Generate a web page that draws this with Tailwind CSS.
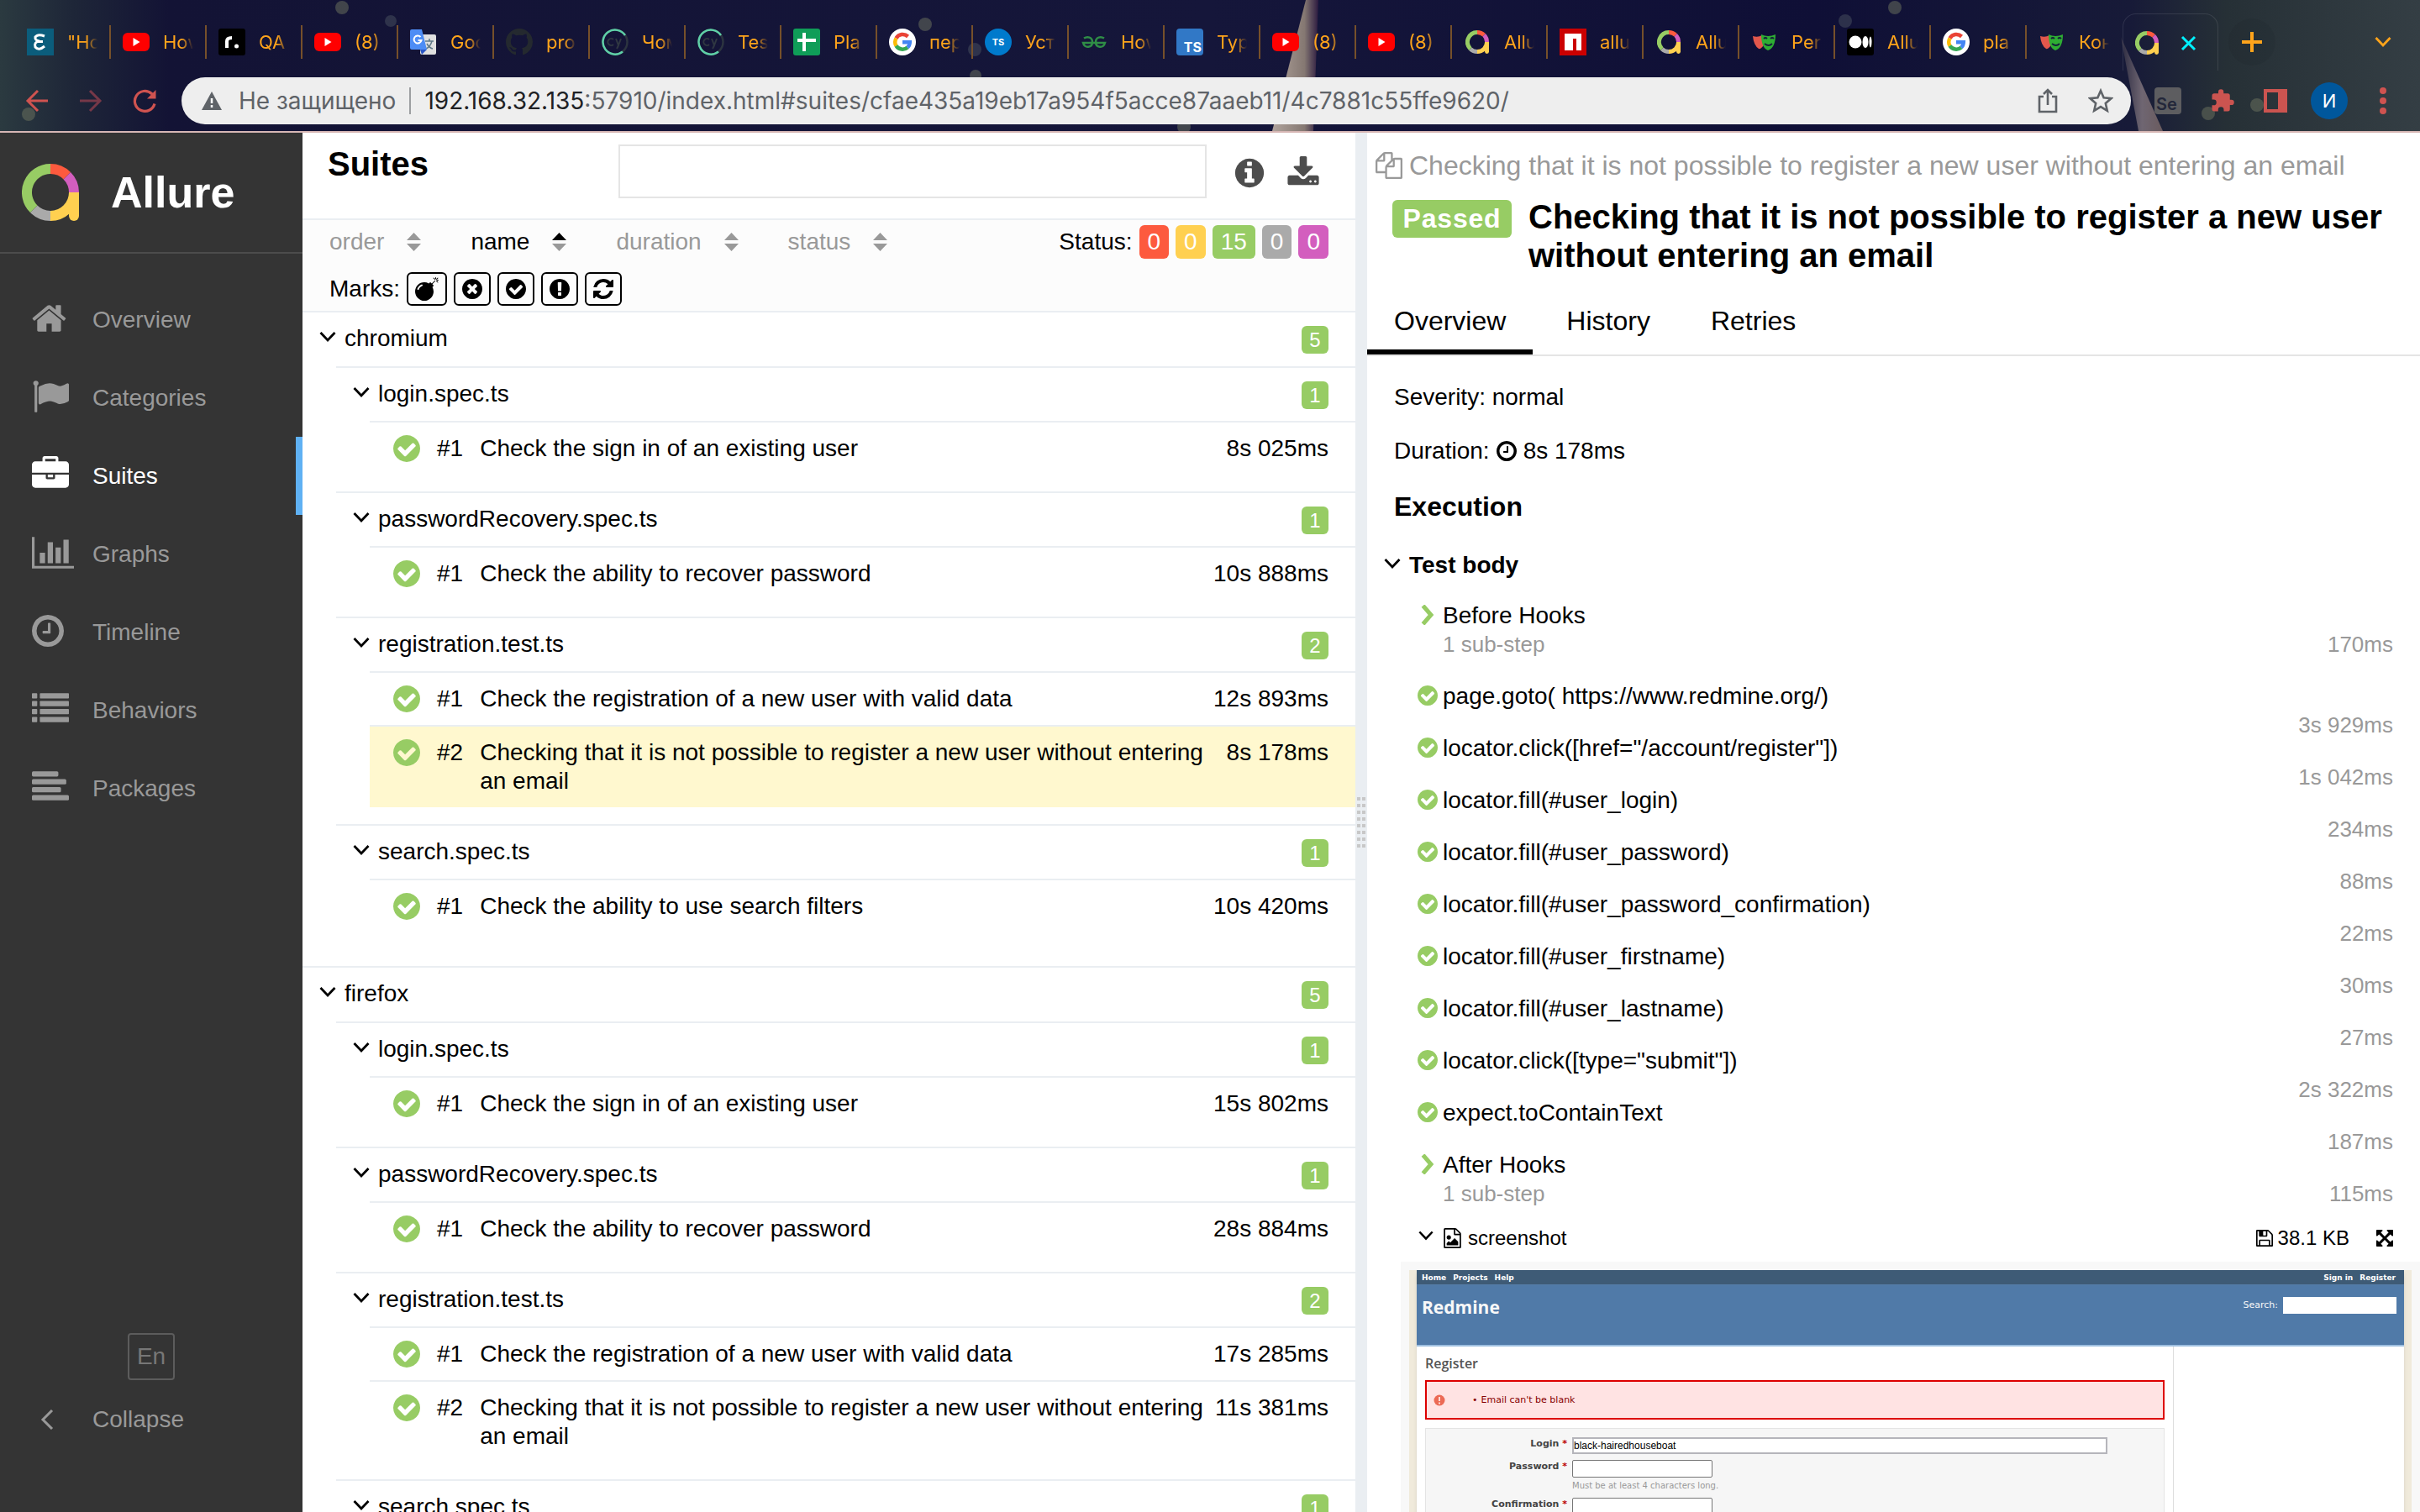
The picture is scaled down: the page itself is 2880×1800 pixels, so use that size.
<!DOCTYPE html>
<html lang="en">
<head>
<meta charset="utf-8">
<title>Allure Report</title>
<script src="https://cdn.jsdelivr.net/npm/@tailwindcss/browser@4"></script>
</head>
<body class="flex h-screen flex-col overflow-hidden bg-white font-['Liberation_Sans',Arial,sans-serif] text-[28px] leading-[34px] text-black">

<!-- Shared icon set -->
<svg class="hidden" aria-hidden="true">
  <symbol id="i-home" viewBox="64 0 1792 1792"><path d="M1472 992v480q0 26-19 45t-45 19h-384v-384h-256v384h-384q-26 0-45-19t-19-45v-480q0-1 .5-3t.5-3l575-474 575 474q1 2 1 6zm223-69l-62 74q-8 9-21 11h-3q-13 0-21-7l-692-577-692 577q-12 8-24 7-13-2-21-11l-62-74q-8-10-7-23.5t11-21.5l719-599q32-26 76-26t76 26l244 204v-195q0-14 9-23t23-9h192q14 0 23 9t9 23v408l219 182q10 8 11 21.5t-7 23.5z"/></symbol>
  <symbol id="i-flag" viewBox="0 0 1792 1792"><path d="M320 256q0 72-64 110v1266q0 13-9.5 22.5t-22.5 9.5h-64q-13 0-22.5-9.5t-9.5-22.5v-1266q-64-38-64-110 0-53 37.5-90.5t90.5-37.5 90.5 37.5 37.5 90.5zm1472 64v763q0 25-12.5 38.5t-39.5 27.5q-215 116-369 116-61 0-123.5-22t-108.5-48-115.5-48-142.5-22q-192 0-464 146-17 9-33 9-26 0-45-19t-19-45v-742q0-32 31-55 21-14 79-43 236-120 421-120 107 0 200 29t219 88q38 19 88 19 54 0 117.5-21t110-47 88-47 54.5-21q26 0 45 19t19 45z"/></symbol>
  <symbol id="i-case" viewBox="0 0 1792 1792"><path d="M640 256h512v-128h-512v128zm1152 640v480q0 66-47 113t-113 47h-1472q-66 0-113-47t-47-113v-480h672v160q0 26 19 45t45 19h320q26 0 45-19t19-45v-160h672zm-768 0v128h-256v-128h256zm768-480v384h-1792v-384q0-66 47-113t113-47h352v-160q0-40 28-68t68-28h576q40 0 68 28t28 68v160h352q66 0 113 47t47 113z"/></symbol>
  <symbol id="i-chart" viewBox="0 0 2048 1792"><path d="M640 896v512h-256v-512h256zm384-512v1024h-256v-1024h256zm1024 1152v128h-2048v-1536h128v1408h1920zm-640-896v768h-256v-768h256zm384-384v1152h-256v-1152h256z"/></symbol>
  <symbol id="i-clock" viewBox="128 128 1536 1536"><path d="M1024 544v448q0 14-9 23t-23 9h-320q-14 0-23-9t-9-23v-64q0-14 9-23t23-9h224v-352q0-14 9-23t23-9h64q14 0 23 9t9 23zm416 352q0-148-73-273t-198-198-273-73-273 73-198 198-73 273 73 273 198 198 273 73 273-73 198-198 73-273zm224 0q0 209-103 385.5t-279.5 279.5-385.5 103-385.5-103-279.5-279.5-103-385.5 103-385.5 279.5-279.5 385.5-103 385.5 103 279.5 279.5 103 385.5z"/></symbol>
  <symbol id="i-list" viewBox="0 0 1792 1792"><g><rect y="128" width="256" height="256" rx="32"/><rect y="512" width="256" height="256" rx="32"/><rect y="896" width="256" height="256" rx="32"/><rect y="1280" width="256" height="256" rx="32"/><rect x="384" y="128" width="1408" height="256" rx="32"/><rect x="384" y="512" width="1408" height="256" rx="32"/><rect x="384" y="896" width="1408" height="256" rx="32"/><rect x="384" y="1280" width="1408" height="256" rx="32"/></g></symbol>
  <symbol id="i-align" viewBox="0 0 1792 1792"><rect y="128" width="1280" height="256" rx="64"/><rect y="512" width="1664" height="256" rx="64"/><rect y="896" width="1408" height="256" rx="64"/><rect y="1280" width="1792" height="256" rx="64"/></symbol>
  <symbol id="i-check" viewBox="128 128 1536 1536"><path d="M1412 734q0-28-18-46l-91-90q-19-19-45-19t-45 19l-408 407-226-226q-19-19-45-19t-45 19l-91 90q-18 18-18 46 0 27 18 45l362 362q19 19 45 19 27 0 46-19l543-543q18-18 18-45zm252 162q0 209-103 385.5t-279.5 279.5-385.5 103-385.5-103-279.5-279.5-103-385.5 103-385.5 279.5-279.5 385.5-103 385.5 103 279.5 279.5 103 385.5z"/></symbol>
  <symbol id="i-times" viewBox="128 128 1536 1536"><path d="M1277 1122q0-26-19-45l-181-181 181-181q19-19 19-45 0-27-19-46l-90-90q-19-19-46-19-26 0-45 19l-181 181-181-181q-19-19-45-19-27 0-46 19l-90 90q-19 19-19 46 0 26 19 45l181 181-181 181q-19 19-19 45 0 27 19 46l90 90q19 19 46 19 26 0 45-19l181-181 181 181q19 19 45 19 27 0 46-19l90-90q19-19 19-46zm387-226q0 209-103 385.5t-279.5 279.5-385.5 103-385.5-103-279.5-279.5-103-385.5 103-385.5 279.5-279.5 385.5-103 385.5 103 279.5 279.5 103 385.5z"/></symbol>
  <symbol id="i-excl" viewBox="128 128 1536 1536"><path d="M896 128q209 0 385.5 103t279.5 279.5 103 385.5-103 385.5-279.5 279.5-385.5 103-385.5-103-279.5-279.5-103-385.5 103-385.5 279.5-279.5 385.5-103zm128 1247v-190q0-14-9-23.5t-22-9.5h-192q-13 0-23 10t-10 23v190q0 13 10 23t23 10h192q13 0 22-9.5t9-23.5zm-2-344l18-621q0-12-10-18-10-8-24-8h-220q-14 0-24 8-10 6-10 18l17 621q0 10 10 17.5t24 7.5h185q14 0 23.5-7.5t10.5-17.5z"/></symbol>
  <symbol id="i-info" viewBox="0 0 1792 1792"><path d="M1152 1376v-160q0-14-9-23t-23-9h-96v-512q0-14-9-23t-23-9h-320q-14 0-23 9t-9 23v160q0 14 9 23t23 9h96v320h-96q-14 0-23 9t-9 23v160q0 14 9 23t23 9h448q14 0 23-9t9-23zm-128-896v-160q0-14-9-23t-23-9h-192q-14 0-23 9t-9 23v160q0 14 9 23t23 9h192q14 0 23-9t9-23zm640 416q0 209-103 385.5t-279.5 279.5-385.5 103-385.5-103-279.5-279.5-103-385.5 103-385.5 279.5-279.5 385.5-103 385.5 103 279.5 279.5 103 385.5z"/></symbol>
  <symbol id="i-download" viewBox="0 0 1792 1792"><path d="M1344 1344q0-26-19-45t-45-19-45 19-19 45 19 45 45 19 45-19 19-45zm256 0q0-26-19-45t-45-19-45 19-19 45 19 45 45 19 45-19 19-45zm128-224v320q0 40-28 68t-68 28h-1472q-40 0-68-28t-28-68v-320q0-40 28-68t68-28h465l135 136q58 56 136 56t136-56l136-136h464q40 0 68 28t28 68zm-325-569q17 41-14 70l-448 448q-18 19-45 19t-45-19l-448-448q-31-29-14-70 17-39 59-39h256v-448q0-26 19-45t45-19h256q26 0 45 19t19 45v448h256q42 0 59 39z"/></symbol>
  <symbol id="i-refresh" viewBox="128 128 1536 1536"><path d="M1639 1056q0 5-1 7-64 268-268 434.5t-478 166.5q-146 0-282.5-55t-243.5-157l-129 129q-19 19-45 19t-45-19-19-45v-448q0-26 19-45t45-19h448q26 0 45 19t19 45-19 45l-137 137q71 66 161 102t187 36q134 0 250-65t186-179q11-17 53-117 8-23 30-23h192q13 0 22.5 9.5t9.5 22.5zm25-800v448q0 26-19 45t-45 19h-448q-26 0-45-19t-19-45 19-45l138-138q-148-137-349-137-134 0-250 65t-186 179q-11 17-53 117-8 23-30 23h-199q-13 0-22.5-9.5t-9.5-22.5v-7q65-268 270-434.5t480-166.5q146 0 284 55.5t245 156.5l130-129q19-19 45-19t45 19 19 45z"/></symbol>
  <symbol id="i-bomb" viewBox="0 0 1792 1792"><path d="M571 589q-10-25-34-35t-49 0q-108 44-191 127t-127 191q-10 25 0 49t35 34q13 5 24 5 42 0 60-40 34-84 98.5-148.5t148.5-98.5q25-11 35-35t0-49zm942-356l46 46-244 243 68 68q19 19 19 45.5t-19 45.5l-64 64q89 161 89 343 0 143-55.5 273.5t-150 225-225 150-273.5 55.5-273.5-55.5-225-150-150-225-55.5-273.5 55.5-273.5 150-225 225-150 273.5-55.5q182 0 343 89l64-64q19-19 45.5-19t45.5 19l68 68zm8-56q-10 10-22 10-13 0-23-10l-91-90q-9-10-9-23t9-23q10-9 23-9t23 9l90 91q10 9 10 22.5t-10 22.5zm230 230q-11 9-23 9t-23-9l-90-91q-10-9-10-22.5t10-22.5q9-10 22.5-10t22.5 10l91 90q9 10 9 23t-9 23zm41-183q0 14-9 23t-23 9h-96q-14 0-23-9t-9-23 9-23 23-9h96q14 0 23 9t9 23zm-192-192v96q0 14-9 23t-23 9-23-9-9-23v-96q0-14 9-23t23-9 23 9 9 23zm151 55l-91 90q-10 10-22 10-13 0-23-10-10-9-10-22.5t10-22.5l90-91q10-9 23-9t23 9q9 10 9 23t-9 23z"/></symbol>
  <symbol id="i-copy" viewBox="0 0 1792 1792"><path d="M1696 384q40 0 68 28t28 68v1216q0 40-28 68t-68 28h-960q-40 0-68-28t-28-68v-288h-544q-40 0-68-28t-28-68v-672q0-40 20-88t48-76l408-408q28-28 76-48t88-20h416q40 0 68 28t28 68v328q68-40 128-40h416zm-544 213l-299 299h299v-299zm-640-384l-299 299h299v-299zm196 647l316-316v-416h-384v416q0 40-28 68t-68 28h-416v640h512v-256q0-40 20-88t48-76zm956 804v-1152h-384v416q0 40-28 68t-68 28h-416v640h896z"/></symbol>
  <symbol id="i-image" viewBox="128 0 1536 1792"><path d="M1596 380q28 28 48 76t20 88v1152q0 40-28 68t-68 28h-1344q-40 0-68-28t-28-68v-1600q0-40 28-68t68-28h896q40 0 88 20t76 48zm-444-244v376h376q-10-29-22-41l-313-313q-12-12-41-22zm384 1528v-1024h-416q-40 0-68-28t-28-68v-416h-768v1536h1280zm-128-448v320h-1024v-192l192-192 128 128 384-384zm-832-192q-80 0-136-56t-56-136 56-136 136-56 136 56 56 136-56 136-136 56z"/></symbol>
  <symbol id="i-save" viewBox="128 128 1536 1536"><path d="M512 1536h768v-384h-768v384zm896 0h128v-896q0-14-10-38.5t-20-34.5l-281-281q-10-10-34-20t-39-10v416q0 40-28 68t-68 28h-576q-40 0-68-28t-28-68v-416h-128v1280h128v-416q0-40 28-68t68-28h832q40 0 68 28t28 68v416zm-384-928v-320q0-13-9.5-22.5t-22.5-9.5h-192q-13 0-22.5 9.5t-9.5 22.5v320q0 13 9.5 22.5t22.5 9.5h192q13 0 22.5-9.5t9.5-22.5zm640 32v928q0 40-28 68t-68 28h-1344q-40 0-68-28t-28-68v-1344q0-40 28-68t68-28h928q40 0 88 20t76 48l280 280q28 28 48 76t20 88z"/></symbol>
  <symbol id="i-expand" viewBox="128 128 1536 1536"><path d="M1411 541l-355 355 355 355 144-144q29-31 70-14 39 17 39 59v448q0 26-19 45t-45 19h-448q-42 0-59-40-17-39 14-69l144-144-355-355-355 355 144 144q31 30 14 69-17 40-59 40h-448q-26 0-45-19t-19-45v-448q0-42 40-59 39-17 69 14l144 144 355-355-355-355-144 144q-19 19-45 19-12 0-24-5-40-17-40-59v-448q0-26 19-45t45-19h448q42 0 59 40 17 39-14 69l-144 144 355 355 355-355-144-144q-31-30-14-69 17-40 59-40h448q26 0 45 19t19 45v448q0 42-39 59-13 5-25 5-26 0-45-19z"/></symbol>
  <symbol id="i-down" viewBox="0 0 20 14"><path d="M1.500 2 10 11 18.500 2" fill="none" stroke="currentColor" stroke-width="2.800"/></symbol>
  <symbol id="i-right" viewBox="0 0 18 24"><path d="M3.500 1 13 12 3.500 23" fill="none" stroke="currentColor" stroke-width="5"/></symbol>
  <symbol id="i-allure" viewBox="0 0 68 68"><g fill="none" stroke-width="12"><path d="M34 62A28 28 0 0 1 14.200 53.800" stroke="#aaa"/><path d="M14.200 53.800A28 28 0 0 1 34 6" stroke="#97cc64"/><path d="M34 6A28 28 0 0 1 53.800 14.200" stroke="#fd5a3e"/><path d="M53.800 14.200A28 28 0 0 1 62 34" stroke="#d35ebe"/><path d="M62 34A28 28 0 0 1 34 62" stroke="#ffd050"/></g><path d="M56 34h12v28a6 6 0 0 1-12 0z" fill="#ffd050"/></symbol>
  <symbol id="i-youtube" viewBox="0 0 32 32"><rect y="5" width="32" height="22" rx="6" fill="#f00"/><path d="M12.500 11v10l8-5z" fill="#fff"/></symbol>
  <symbol id="i-google" viewBox="0 0 32 32"><circle cx="16" cy="16" r="16" fill="#fff"/><g fill="none" stroke-width="4.500"><path d="M8.500 11.500A9 9 0 0 1 22.500 9.500" stroke="#ea4335"/><path d="M8.500 20.500A9 9 0 0 1 8.500 11.500" stroke="#fbbc05"/><path d="M22 22.500A9 9 0 0 1 8.500 20.500" stroke="#34a853"/><path d="M16 16.200h8.800A9 9 0 0 1 22 22.500" stroke="#4285f4"/></g></symbol>
  <symbol id="i-cypress" viewBox="0 0 32 32"><circle cx="16" cy="16" r="14.500" fill="none" stroke="#2c3440" stroke-width="2.500"/><path d="M25 27.500A14.500 14.500 0 1 1 28 8" fill="none" stroke="#5fd0a8" stroke-width="2.500"/><path d="M14 13a4 4 0 1 0 0 6M17 12l3 8 3-8M20 20l-2 4" fill="none" stroke="#2f3742" stroke-width="2"/></symbol>
  <symbol id="i-masks" viewBox="0 0 32 32"><path d="M2 9q6 2 11-1l3 10q-4 7-7 6-6-4-7-15z" fill="#e2574c"/><path d="M12 7q8 4 17 0 0 16-9 19-8-3-8-19z" fill="#2ead33"/><path d="M15 12q2-2 4 0M23 12q2-2 4 0M16 18q5 4 9 0" fill="none" stroke="#13203a" stroke-width="1.800"/></symbol>
</svg>

<!-- Browser window -->
<header class="relative shrink-0 overflow-hidden border-b-2 border-[#d6b6b4] bg-[#12123a] font-[Inter,sans-serif]">
  <svg class="absolute inset-0 h-full w-full" viewBox="0 0 2880 156" preserveAspectRatio="none" aria-hidden="true">
    <defs>
      <linearGradient id="sky"><stop offset="0" stop-color="#2b3a40"/><stop offset=".03" stop-color="#1e2638"/><stop offset=".07" stop-color="#131335"/><stop offset=".5" stop-color="#15163a"/><stop offset=".75" stop-color="#0f0f36"/><stop offset=".88" stop-color="#171a38"/><stop offset=".92" stop-color="#263036"/><stop offset="1" stop-color="#343e44"/></linearGradient>
      <linearGradient id="blade"><stop offset="0" stop-color="#b0a39c"/><stop offset=".7" stop-color="#857872"/><stop offset="1" stop-color="#2c1a40"/></linearGradient>
      <linearGradient id="blade-dark"><stop offset="0" stop-color="#2b2a40"/><stop offset=".5" stop-color="#6f6672"/><stop offset="1" stop-color="#6a5b5e"/></linearGradient>
    </defs>
    <rect width="2880" height="156" fill="url(#sky)"/>
    <g fill="#6f7560" opacity=".5"><circle cx="407" cy="9" r="8"/><circle cx="34" cy="136" r="8"/><circle cx="1101" cy="29" r="8"/><circle cx="1161" cy="90" r="7"/><circle cx="1409" cy="151" r="8"/><circle cx="2255" cy="9" r="8"/><circle cx="2686" cy="125" r="8"/><circle cx="2628" cy="135" r="8"/></g>
    <g fill="#4a5160" opacity=".5"><circle cx="465" cy="25" r="7"/><circle cx="1160" cy="59" r="8"/><circle cx="2196" cy="25" r="8"/></g>
    <path d="M1554 0h15l-6 156h-49z" fill="url(#blade)"/>
    <path d="M2524 44 2574 156h-29z" fill="url(#blade-dark)"/>
  </svg>

  <div class="relative flex h-[84px] items-center pt-4 pl-[18px] text-[22px] text-[#ffa41b]">
    <div class="flex w-[114px] shrink-0 items-center gap-4 border-r-2 border-[#76502a] pl-3.5 leading-10"><svg class="size-8 shrink-0" viewBox="0 0 32 32"><rect width="32" height="32" fill="#0b5d7c"/><path d="M21 9q-8-3-11 1-1 4 5 5-7 1-5 7 4 5 11-1M11 15.500h8" fill="none" stroke="#fff" stroke-width="3"/></svg><span class="w-9 overflow-hidden whitespace-nowrap [mask-image:linear-gradient(to_right,black_60%,transparent)]">"Ho</span></div>
    <div class="flex w-[114px] shrink-0 items-center gap-4 border-r-2 border-[#76502a] pl-3.5 leading-10"><svg class="size-8 shrink-0"><use href="#i-youtube"/></svg><span class="w-9 overflow-hidden whitespace-nowrap [mask-image:linear-gradient(to_right,black_60%,transparent)]">How</span></div>
    <div class="flex w-[114px] shrink-0 items-center gap-4 border-r-2 border-[#76502a] pl-3.5 leading-10"><svg class="size-8 shrink-0" viewBox="0 0 32 32"><rect width="32" height="32" rx="3" fill="#000"/><path d="M10 23V15q0-4 6-4" fill="none" stroke="#fff" stroke-width="4"/><circle cx="21.500" cy="21" r="2.500" fill="#fff"/></svg><span class="w-9 overflow-hidden whitespace-nowrap [mask-image:linear-gradient(to_right,black_60%,transparent)]">QA</span></div>
    <div class="flex w-[114px] shrink-0 items-center gap-4 border-r-2 border-[#76502a] pl-3.5 leading-10"><svg class="size-8 shrink-0"><use href="#i-youtube"/></svg><span class="w-9 overflow-hidden whitespace-nowrap [mask-image:linear-gradient(to_right,black_60%,transparent)]">(8)</span></div>
    <div class="flex w-[114px] shrink-0 items-center gap-4 border-r-2 border-[#76502a] pl-3.5 leading-10"><svg class="size-8 shrink-0" viewBox="0 0 32 32"><rect x="12" y="7" width="19" height="24" rx="2" fill="#e0e0e0"/><path d="M18 15h10M23 12v3M26 15q-2 7-7 9M20 18q3 5 7 6" stroke="#607988" stroke-width="1.500" fill="none"/><path d="M2 1h12l6 24H2a2 2 0 0 1-2-2V3a2 2 0 0 1 2-2z" fill="#4e8df5"/><path d="M14 31l-2-6h8z" fill="#2a56c6"/><path d="M12.500 10a4.500 4.500 0 1 0 1 4H9.500" stroke="#fff" stroke-width="2" fill="none"/></svg><span class="w-9 overflow-hidden whitespace-nowrap [mask-image:linear-gradient(to_right,black_60%,transparent)]">Goo</span></div>
    <div class="flex w-[114px] shrink-0 items-center gap-4 border-r-2 border-[#76502a] pl-3.5 leading-10"><svg class="size-8 shrink-0" viewBox="0 0 16 16" fill="#24292f"><path d="M8 0C3.580 0 0 3.580 0 8c0 3.540 2.290 6.530 5.470 7.590.4.070.55-.17.55-.38 0-.19-.01-.82-.01-1.490-2.010.37-2.530-.49-2.690-.94-.09-.23-.48-.94-.82-1.130-.28-.15-.68-.52-.01-.53.63-.01 1.080.58 1.230.82.72 1.210 1.870.87 2.330.66.07-.52.28-.87.51-1.070-1.780-.2-3.640-.89-3.640-3.950 0-.87.31-1.590.82-2.150-.08-.2-.36-1.020.08-2.120 0 0 .67-.21 2.200.82.64-.18 1.320-.27 2-.27s1.360.09 2 .27c1.530-1.040 2.200-.82 2.200-.82.44 1.100.16 1.920.08 2.120.51.56.82 1.270.82 2.150 0 3.070-1.870 3.750-3.650 3.950.29.25.54.73.54 1.480 0 1.070-.01 1.930-.01 2.200 0 .21.15.46.55.38A8.010 8.010 0 0 0 16 8c0-4.420-3.580-8-8-8z"/></svg><span class="w-9 overflow-hidden whitespace-nowrap [mask-image:linear-gradient(to_right,black_60%,transparent)]">pro</span></div>
    <div class="flex w-[114px] shrink-0 items-center gap-4 border-r-2 border-[#76502a] pl-3.5 leading-10"><svg class="size-8 shrink-0"><use href="#i-cypress"/></svg><span class="w-9 overflow-hidden whitespace-nowrap [mask-image:linear-gradient(to_right,black_60%,transparent)]">Чом</span></div>
    <div class="flex w-[114px] shrink-0 items-center gap-4 border-r-2 border-[#76502a] pl-3.5 leading-10"><svg class="size-8 shrink-0"><use href="#i-cypress"/></svg><span class="w-9 overflow-hidden whitespace-nowrap [mask-image:linear-gradient(to_right,black_60%,transparent)]">Tes</span></div>
    <div class="flex w-[114px] shrink-0 items-center gap-4 border-r-2 border-[#76502a] pl-3.5 leading-10"><svg class="size-8 shrink-0" viewBox="0 0 32 32"><rect width="32" height="32" rx="3" fill="#0f9d58"/><path d="M13 5v22M5 14h22" stroke="#fff" stroke-width="4"/></svg><span class="w-9 overflow-hidden whitespace-nowrap [mask-image:linear-gradient(to_right,black_60%,transparent)]">Pla</span></div>
    <div class="flex w-[114px] shrink-0 items-center gap-4 border-r-2 border-[#76502a] pl-3.5 leading-10"><svg class="size-8 shrink-0"><use href="#i-google"/></svg><span class="w-9 overflow-hidden whitespace-nowrap [mask-image:linear-gradient(to_right,black_60%,transparent)]">пер</span></div>
    <div class="flex w-[114px] shrink-0 items-center gap-4 border-r-2 border-[#76502a] pl-3.5 leading-10"><span class="flex size-8 shrink-0 items-center justify-center rounded-full bg-[#007acc] text-[11px] font-bold text-white">TS</span><span class="w-9 overflow-hidden whitespace-nowrap [mask-image:linear-gradient(to_right,black_60%,transparent)]">Уст</span></div>
    <div class="flex w-[114px] shrink-0 items-center gap-4 border-r-2 border-[#76502a] pl-3.5 leading-10"><svg class="size-8 shrink-0" viewBox="0 0 32 32" fill="none" stroke="#2f8d46" stroke-width="2.500"><path d="M4 11.500C8 9 14 10 14 16c0 7-9 8-11 1h26c-2 7-11 6-11-1 0-6 6-7 10-4.500"/></svg><span class="w-9 overflow-hidden whitespace-nowrap [mask-image:linear-gradient(to_right,black_60%,transparent)]">How</span></div>
    <div class="flex w-[114px] shrink-0 items-center gap-4 border-r-2 border-[#76502a] pl-3.5 leading-10"><span class="flex size-8 shrink-0 items-end justify-end rounded-sm bg-[#3178c6] pr-0.5 text-base leading-5 font-bold text-white">TS</span><span class="w-9 overflow-hidden whitespace-nowrap [mask-image:linear-gradient(to_right,black_60%,transparent)]">Typ</span></div>
    <div class="flex w-[114px] shrink-0 items-center gap-4 border-r-2 border-[#76502a] pl-3.5 leading-10"><svg class="size-8 shrink-0"><use href="#i-youtube"/></svg><span class="w-9 overflow-hidden whitespace-nowrap [mask-image:linear-gradient(to_right,black_60%,transparent)]">(8)</span></div>
    <div class="flex w-[114px] shrink-0 items-center gap-4 border-r-2 border-[#76502a] pl-3.5 leading-10"><svg class="size-8 shrink-0"><use href="#i-youtube"/></svg><span class="w-9 overflow-hidden whitespace-nowrap [mask-image:linear-gradient(to_right,black_60%,transparent)]">(8)</span></div>
    <div class="flex w-[114px] shrink-0 items-center gap-4 border-r-2 border-[#76502a] pl-3.5 leading-10"><svg class="size-8 shrink-0 p-0.5"><use href="#i-allure"/></svg><span class="w-9 overflow-hidden whitespace-nowrap [mask-image:linear-gradient(to_right,black_60%,transparent)]">Allu</span></div>
    <div class="flex w-[114px] shrink-0 items-center gap-4 border-r-2 border-[#76502a] pl-3.5 leading-10"><svg class="size-8 shrink-0" viewBox="0 0 32 32"><rect width="32" height="32" fill="#cb0000"/><path d="M6 6h20v20h-6V12h-4v14H6z" fill="#fff"/></svg><span class="w-9 overflow-hidden whitespace-nowrap [mask-image:linear-gradient(to_right,black_60%,transparent)]">allu</span></div>
    <div class="flex w-[114px] shrink-0 items-center gap-4 border-r-2 border-[#76502a] pl-3.5 leading-10"><svg class="size-8 shrink-0 p-0.5"><use href="#i-allure"/></svg><span class="w-9 overflow-hidden whitespace-nowrap [mask-image:linear-gradient(to_right,black_60%,transparent)]">Allu</span></div>
    <div class="flex w-[114px] shrink-0 items-center gap-4 border-r-2 border-[#76502a] pl-3.5 leading-10"><svg class="size-8 shrink-0"><use href="#i-masks"/></svg><span class="w-9 overflow-hidden whitespace-nowrap [mask-image:linear-gradient(to_right,black_60%,transparent)]">Per</span></div>
    <div class="flex w-[114px] shrink-0 items-center gap-4 border-r-2 border-[#76502a] pl-3.5 leading-10"><svg class="size-8 shrink-0" viewBox="0 0 32 32"><rect width="32" height="32" rx="3" fill="#000"/><g fill="#fff"><circle cx="10" cy="16" r="7.500"/><ellipse cx="22" cy="16" rx="3.500" ry="7"/><ellipse cx="28" cy="16" rx="1.500" ry="6.500"/></g></svg><span class="w-9 overflow-hidden whitespace-nowrap [mask-image:linear-gradient(to_right,black_60%,transparent)]">Allu</span></div>
    <div class="flex w-[114px] shrink-0 items-center gap-4 border-r-2 border-[#76502a] pl-3.5 leading-10"><svg class="size-8 shrink-0"><use href="#i-google"/></svg><span class="w-9 overflow-hidden whitespace-nowrap [mask-image:linear-gradient(to_right,black_60%,transparent)]">pla</span></div>
    <div class="flex w-[114px] shrink-0 items-center gap-4 pl-3.5 leading-10"><svg class="size-8 shrink-0"><use href="#i-masks"/></svg><span class="w-9 overflow-hidden whitespace-nowrap [mask-image:linear-gradient(to_right,black_60%,transparent)]">Кон</span></div>
    <div class="flex h-full w-[114px] shrink-0 items-center gap-6 rounded-t-2xl border border-b-0 border-white/10 pl-3"><svg class="size-8 shrink-0 p-0.5"><use href="#i-allure"/></svg><button aria-label="Close tab"><svg class="size-5" viewBox="0 0 20 20"><path d="M2 3 17 18M17 3 2 18" stroke="#00f0ff" stroke-width="3"/></svg></button></div>
    <button class="ml-3 flex size-14 items-center justify-center rounded-full bg-black/5" aria-label="New tab"><svg class="size-7" viewBox="0 0 28 28"><path d="M14 2v24M2 14h24" stroke="#ffa41b" stroke-width="4"/></svg></button>
    <button class="mr-[34px] ml-auto" aria-label="Search tabs"><svg class="h-3.5 w-5 text-[#ffa41b]"><use href="#i-down"/></svg></button>
  </div>

  <div class="relative flex h-[72px] items-center pr-10 pl-[30px]">
    <div class="flex gap-9 text-[#cf5350]">
      <button aria-label="Back"><svg class="size-7" viewBox="0 0 28 28" fill="none" stroke="currentColor" stroke-width="3"><path d="M27 14H4M15 2 3 14l12 12"/></svg></button>
      <button class="text-[#763848]" aria-label="Forward"><svg class="size-7" viewBox="0 0 28 28" fill="none" stroke="currentColor" stroke-width="3"><path d="M1 14h23M13 2l12 12-12 12"/></svg></button>
      <button aria-label="Reload"><svg class="size-7" viewBox="0 0 28 28" fill="none" stroke="currentColor" stroke-width="3.200"><path d="M26 17.500A12 12 0 1 1 22.500 5.500L25 8"/><path d="M27.500 1v10.500H17z" fill="currentColor" stroke="none"/></svg></button>
    </div>
    <div class="ml-[30px] flex h-14 flex-1 items-center rounded-full bg-[#eee] pr-[21px] pl-6 text-[28px] text-[#5f6368]">
      <svg class="h-[22px] w-6" viewBox="0 0 24 22"><path d="M12 0 24 22H0z" fill="#5f6368"/><path d="M12 8v6M12 16v3" stroke="#fff" stroke-width="2.500"/></svg>
      <span class="ml-5 whitespace-nowrap">Не защищено</span>
      <span class="mx-4 h-8 w-0.5 bg-[#9d9fa1]"></span>
      <span class="flex-1 whitespace-nowrap"><span class="text-[#202124]">192.168.32.135</span>:57910/index.html#suites/cfae435a19eb17a954f5acce87aaeb11/4c7881c55ffe9620/</span>
      <button aria-label="Share"><svg class="h-[30px] w-6" viewBox="0 0 24 30" fill="none" stroke="#5f6368" stroke-width="2.600"><path d="M7 10H2v18h20V10h-5M12 20V2.500M7 7l5-5 5 5"/></svg></button>
      <button class="ml-9" aria-label="Bookmark"><svg class="size-[30px]" viewBox="0 0 30 30" fill="none" stroke="#5f6368" stroke-width="2.600"><path d="M15 3l3.600 8.300 9 .8-6.800 5.900 2 8.800L15 22.100l-7.800 4.700 2-8.800-6.800-5.900 9-.8z"/></svg></button>
    </div>
    <button class="ml-7 flex size-8 items-end rounded-sm bg-[#5d5d60] pl-0.5 text-xl leading-6 font-semibold text-[#23273a]">Se</button>
    <button class="ml-[34px]" aria-label="Extensions"><svg class="size-[30px]" viewBox="0 0 24 24" fill="#cb5450"><path d="M20.500 11H19V7a2 2 0 0 0-2-2h-4V3.500a2.500 2.500 0 0 0-5 0V5H4a2 2 0 0 0-2 2v3.800h1.500a2.700 2.700 0 0 1 0 5.400H2V20a2 2 0 0 0 2 2h3.800v-1.500a2.700 2.700 0 0 1 5.400 0V22H17a2 2 0 0 0 2-2v-4h1.500a2.500 2.500 0 0 0 0-5z"/></svg></button>
    <button class="ml-[34px] h-7 w-7 border-4 border-r-[11px] border-[#cb5450]" aria-label="Side panel"></button>
    <button class="ml-7 size-11 rounded-full bg-[#00579c] text-[22px] text-white">И</button>
    <button class="ml-[38px] flex flex-col gap-1" aria-label="Menu"><span class="size-2 rounded-full bg-[#cf5350]"></span><span class="size-2 rounded-full bg-[#cf5350]"></span><span class="size-2 rounded-full bg-[#cf5350]"></span></button>
  </div>
</header>

<div class="flex min-h-0 flex-1">
  <!-- Navigation -->
  <nav class="flex w-[360px] shrink-0 flex-col bg-[#343434] text-[#999]">
    <a href="#" class="flex h-36 items-center gap-[38px] border-b-2 border-[#4c4c4c] pl-[26px] text-[52px] font-bold text-white"><svg class="size-[68px]"><use href="#i-allure"/></svg>Allure</a>
    <ul class="flex-1 pt-8">
      <li><a href="#" class="flex h-[93px] items-center pl-[38px]"><span class="w-[72px] pb-1"><svg class="size-11 fill-current"><use href="#i-home"/></svg></span>Overview</a></li>
      <li><a href="#" class="flex h-[93px] items-center pl-[38px]"><span class="w-[72px] pb-1"><svg class="size-11 fill-current"><use href="#i-flag"/></svg></span>Categories</a></li>
      <li><a href="#" class="flex h-[93px] items-center border-r-8 border-[#5fb1f3] pl-[38px] text-white"><span class="w-[72px] pb-1"><svg class="size-11 fill-current"><use href="#i-case"/></svg></span>Suites</a></li>
      <li><a href="#" class="flex h-[93px] items-center pl-[38px]"><span class="w-[72px] pb-1"><svg class="h-11 w-[50px] fill-current"><use href="#i-chart"/></svg></span>Graphs</a></li>
      <li><a href="#" class="flex h-[93px] items-center pl-[38px]"><span class="w-[72px] pb-1"><svg class="size-[38px] fill-current"><use href="#i-clock"/></svg></span>Timeline</a></li>
      <li><a href="#" class="flex h-[93px] items-center pl-[38px]"><span class="w-[72px] pb-1"><svg class="size-11 fill-current"><use href="#i-list"/></svg></span>Behaviors</a></li>
      <li><a href="#" class="flex h-[93px] items-center pl-[38px]"><span class="w-[72px] pb-1"><svg class="size-11 fill-current"><use href="#i-align"/></svg></span>Packages</a></li>
    </ul>
    <div class="pb-16">
      <button class="mx-auto block size-14 rounded-sm border-2 border-[#5c5c5c] text-[#777]">En</button>
      <button class="flex h-[93px] items-center pl-[38px]"><span class="w-[72px] pl-2.5"><svg class="h-6 w-4" viewBox="0 0 16 24"><path d="M14 1 3 12l11 11" fill="none" stroke="currentColor" stroke-width="3"/></svg></span>Collapse</button>
    </div>
  </nav>

  <!-- Suites tree -->
  <main class="min-w-0 flex-1 overflow-hidden">
    <div class="flex h-[102px] items-start pt-3.5 pr-[42px] pl-[30px]">
      <h1 class="mt-[3px] w-[346px] text-[40px] leading-[40px] font-bold">Suites</h1>
      <input type="text" aria-label="Search suites" class="h-16 min-w-0 flex-1 border-2 border-[#e5e5e5]">
      <div class="ml-[31px] flex gap-6 pt-3.5 text-[#4d4d4d]">
        <button aria-label="Info"><svg class="size-10 fill-current"><use href="#i-info"/></svg></button>
        <button aria-label="Download CSV"><svg class="size-10 fill-current"><use href="#i-download"/></svg></button>
      </div>
    </div>
    <div class="h-[110px] border-t-2 border-[#eaeef2] bg-[#fcfcfc] pt-1.5 pr-8 pl-8">
      <div class="flex h-10 items-center">
        <button class="flex items-center gap-[27px] text-[#999]">order<svg class="h-[22px] w-[17px] fill-current" viewBox="0 0 17 22"><path d="M8.500 0 17 9H0zM0 13h17l-8.500 9z"/></svg></button>
        <button class="ml-[59px] flex items-center gap-[27px]">name<svg class="h-[22px] w-[17px]" viewBox="0 0 17 22"><path d="M8.500 0 17 9H0z"/><path d="M0 13h17l-8.500 9z" fill="#999"/></svg></button>
        <button class="ml-[59px] flex items-center gap-[27px] text-[#999]">duration<svg class="h-[22px] w-[17px] fill-current" viewBox="0 0 17 22"><path d="M8.500 0 17 9H0zM0 13h17l-8.500 9z"/></svg></button>
        <button class="ml-[59px] flex items-center gap-[27px] text-[#999]">status<svg class="h-[22px] w-[17px] fill-current" viewBox="0 0 17 22"><path d="M8.500 0 17 9H0zM0 13h17l-8.500 9z"/></svg></button>
        <div class="ml-auto flex items-center gap-2 text-white">
          <span class="text-black">Status:</span>
          <button class="h-10 rounded-md bg-[#fd5a3e] px-2.5">0</button>
          <button class="h-10 rounded-md bg-[#ffd050] px-2.5">0</button>
          <button class="h-10 rounded-md bg-[#97cc64] px-2.5">15</button>
          <button class="h-10 rounded-md bg-[#aaa] px-2.5">0</button>
          <button class="h-10 rounded-md bg-[#d35ebe] px-2.5">0</button>
        </div>
      </div>
      <div class="mt-4 flex h-10 items-center gap-2">
        <span>Marks:</span>
        <button class="flex h-10 items-center rounded-md border-2 px-2" aria-label="Newly failed"><svg class="size-7"><use href="#i-bomb"/></svg></button>
        <button class="flex h-10 items-center rounded-md border-2 px-2" aria-label="Newly broken"><svg class="size-6"><use href="#i-times"/></svg></button>
        <button class="flex h-10 items-center rounded-md border-2 px-2" aria-label="Newly passed"><svg class="size-6"><use href="#i-check"/></svg></button>
        <button class="flex h-10 items-center rounded-md border-2 px-2" aria-label="Flaky"><svg class="size-6"><use href="#i-excl"/></svg></button>
        <button class="flex h-10 items-center rounded-md border-2 px-2" aria-label="Retries"><svg class="size-6"><use href="#i-refresh"/></svg></button>
      </div>
    </div>

    <ul>
      <li class="pb-5">
        <button class="flex w-full items-start border-t-2 border-[#eaeef2] pt-3.5 pr-8 pb-4 pl-5"><svg class="mt-2 mr-2.5 h-3.5 w-5"><use href="#i-down"/></svg>chromium<span class="mt-0.5 -mb-1 ml-auto w-8 rounded-md bg-[#97cc64] text-center text-2xl leading-[33px] text-white">5</span></button>
        <ul class="ml-10">
          <li class="pb-5">
            <button class="flex w-full items-start border-t-2 border-[#eaeef2] pt-3.5 pr-8 pb-[15px] pl-5"><svg class="mt-2 mr-2.5 h-3.5 w-5"><use href="#i-down"/></svg>login.spec.ts<span class="mt-0.5 -mb-1 ml-auto w-8 rounded-md bg-[#97cc64] text-center text-2xl leading-[33px] text-white">1</span></button>
            <a href="#" class="ml-10 flex items-start border-t-2 border-[#eaeef2] py-3.5 pr-8 pl-7"><svg class="mt-px size-8 shrink-0 fill-[#97cc64]"><use href="#i-check"/></svg><span class="mx-5">#1</span><span class="flex-1">Check the sign in of an existing user</span><span class="ml-2 whitespace-nowrap">8s 025ms</span></a>
          </li>
          <li class="pb-5">
            <button class="flex w-full items-start border-t-2 border-[#eaeef2] pt-3.5 pr-8 pb-[15px] pl-5"><svg class="mt-2 mr-2.5 h-3.5 w-5"><use href="#i-down"/></svg>passwordRecovery.spec.ts<span class="mt-0.5 -mb-1 ml-auto w-8 rounded-md bg-[#97cc64] text-center text-2xl leading-[33px] text-white">1</span></button>
            <a href="#" class="ml-10 flex items-start border-t-2 border-[#eaeef2] py-3.5 pr-8 pl-7"><svg class="mt-px size-8 shrink-0 fill-[#97cc64]"><use href="#i-check"/></svg><span class="mx-5">#1</span><span class="flex-1">Check the ability to recover password</span><span class="ml-2 whitespace-nowrap">10s 888ms</span></a>
          </li>
          <li class="pb-5">
            <button class="flex w-full items-start border-t-2 border-[#eaeef2] pt-3.5 pr-8 pb-[15px] pl-5"><svg class="mt-2 mr-2.5 h-3.5 w-5"><use href="#i-down"/></svg>registration.test.ts<span class="mt-0.5 -mb-1 ml-auto w-8 rounded-md bg-[#97cc64] text-center text-2xl leading-[33px] text-white">2</span></button>
            <a href="#" class="ml-10 flex items-start border-t-2 border-[#eaeef2] py-3.5 pr-8 pl-7"><svg class="mt-px size-8 shrink-0 fill-[#97cc64]"><use href="#i-check"/></svg><span class="mx-5">#1</span><span class="flex-1">Check the registration of a new user with valid data</span><span class="ml-2 whitespace-nowrap">12s 893ms</span></a>
            <a href="#" class="ml-10 flex items-start border-t-2 border-[#eaeef2] bg-[#fff8cf] py-3.5 pr-8 pl-7"><svg class="mt-px size-8 shrink-0 fill-[#97cc64]"><use href="#i-check"/></svg><span class="mx-5">#2</span><span class="flex-1">Checking that it is not possible to register a new user without entering an email</span><span class="ml-2 whitespace-nowrap">8s 178ms</span></a>
          </li>
          <li class="pb-5">
            <button class="flex w-full items-start border-t-2 border-[#eaeef2] pt-3.5 pr-8 pb-[15px] pl-5"><svg class="mt-2 mr-2.5 h-3.5 w-5"><use href="#i-down"/></svg>search.spec.ts<span class="mt-0.5 -mb-1 ml-auto w-8 rounded-md bg-[#97cc64] text-center text-2xl leading-[33px] text-white">1</span></button>
            <a href="#" class="ml-10 flex items-start border-t-2 border-[#eaeef2] py-3.5 pr-8 pl-7"><svg class="mt-px size-8 shrink-0 fill-[#97cc64]"><use href="#i-check"/></svg><span class="mx-5">#1</span><span class="flex-1">Check the ability to use search filters</span><span class="ml-2 whitespace-nowrap">10s 420ms</span></a>
          </li>
        </ul>
      </li>
      <li class="pb-5">
        <button class="flex w-full items-start border-t-2 border-[#eaeef2] pt-3.5 pr-8 pb-4 pl-5"><svg class="mt-2 mr-2.5 h-3.5 w-5"><use href="#i-down"/></svg>firefox<span class="mt-0.5 -mb-1 ml-auto w-8 rounded-md bg-[#97cc64] text-center text-2xl leading-[33px] text-white">5</span></button>
        <ul class="ml-10">
          <li class="pb-5">
            <button class="flex w-full items-start border-t-2 border-[#eaeef2] pt-3.5 pr-8 pb-[15px] pl-5"><svg class="mt-2 mr-2.5 h-3.5 w-5"><use href="#i-down"/></svg>login.spec.ts<span class="mt-0.5 -mb-1 ml-auto w-8 rounded-md bg-[#97cc64] text-center text-2xl leading-[33px] text-white">1</span></button>
            <a href="#" class="ml-10 flex items-start border-t-2 border-[#eaeef2] py-3.5 pr-8 pl-7"><svg class="mt-px size-8 shrink-0 fill-[#97cc64]"><use href="#i-check"/></svg><span class="mx-5">#1</span><span class="flex-1">Check the sign in of an existing user</span><span class="ml-2 whitespace-nowrap">15s 802ms</span></a>
          </li>
          <li class="pb-5">
            <button class="flex w-full items-start border-t-2 border-[#eaeef2] pt-3.5 pr-8 pb-[15px] pl-5"><svg class="mt-2 mr-2.5 h-3.5 w-5"><use href="#i-down"/></svg>passwordRecovery.spec.ts<span class="mt-0.5 -mb-1 ml-auto w-8 rounded-md bg-[#97cc64] text-center text-2xl leading-[33px] text-white">1</span></button>
            <a href="#" class="ml-10 flex items-start border-t-2 border-[#eaeef2] py-3.5 pr-8 pl-7"><svg class="mt-px size-8 shrink-0 fill-[#97cc64]"><use href="#i-check"/></svg><span class="mx-5">#1</span><span class="flex-1">Check the ability to recover password</span><span class="ml-2 whitespace-nowrap">28s 884ms</span></a>
          </li>
          <li class="pb-5">
            <button class="flex w-full items-start border-t-2 border-[#eaeef2] pt-3.5 pr-8 pb-[15px] pl-5"><svg class="mt-2 mr-2.5 h-3.5 w-5"><use href="#i-down"/></svg>registration.test.ts<span class="mt-0.5 -mb-1 ml-auto w-8 rounded-md bg-[#97cc64] text-center text-2xl leading-[33px] text-white">2</span></button>
            <a href="#" class="ml-10 flex items-start border-t-2 border-[#eaeef2] py-3.5 pr-8 pl-7"><svg class="mt-px size-8 shrink-0 fill-[#97cc64]"><use href="#i-check"/></svg><span class="mx-5">#1</span><span class="flex-1">Check the registration of a new user with valid data</span><span class="ml-2 whitespace-nowrap">17s 285ms</span></a>
            <a href="#" class="ml-10 flex items-start border-t-2 border-[#eaeef2] py-3.5 pr-8 pl-7"><svg class="mt-px size-8 shrink-0 fill-[#97cc64]"><use href="#i-check"/></svg><span class="mx-5">#2</span><span class="flex-1">Checking that it is not possible to register a new user without entering an email</span><span class="ml-2 whitespace-nowrap">11s 381ms</span></a>
          </li>
          <li class="pb-5">
            <button class="flex w-full items-start border-t-2 border-[#eaeef2] pt-3.5 pr-8 pb-[15px] pl-5"><svg class="mt-2 mr-2.5 h-3.5 w-5"><use href="#i-down"/></svg>search.spec.ts<span class="mt-0.5 -mb-1 ml-auto w-8 rounded-md bg-[#97cc64] text-center text-2xl leading-[33px] text-white">1</span></button>
          </li>
        </ul>
      </li>
    </ul>
  </main>

  <!-- Splitter -->
  <div class="flex w-3.5 shrink-0 items-center justify-center bg-[#eaeef2]">
    <svg class="h-[60px] w-3" viewBox="0 0 12 60"><path d="M3 0v60M9 0v60" stroke="#c8c8c8" stroke-width="4" stroke-dasharray="4 4"/></svg>
  </div>

  <!-- Test result -->
  <section class="min-w-0 flex-1 overflow-hidden">
    <div class="flex items-center gap-2 pt-[19px] pl-2.5 text-[32px] leading-10 text-[#999]"><svg class="size-8 fill-current"><use href="#i-copy"/></svg><span class="whitespace-nowrap">Checking that it is not possible to register a new user without entering an email</span></div>
    <div class="mt-[18px] flex items-start gap-5 pr-[30px] pl-[30px]">
      <span class="mt-[3px] w-[142px] shrink-0 rounded-md bg-[#97cc64] text-center text-[32px] leading-[45px] font-bold tracking-wide text-white">Passed</span>
      <h2 class="text-[40px] leading-[46px] font-bold">Checking that it is not possible to register a new user without entering an email</h2>
    </div>
    <ul class="mt-5 flex gap-2 border-b-2 border-[#e5e5e5] text-[32px] leading-[38px]">
      <li><a href="#" class="block border-b-[6px] border-black px-8 pt-4 pb-[15px]">Overview</a></li>
      <li><a href="#" class="block px-8 pt-4 pb-[15px]">History</a></li>
      <li><a href="#" class="block px-8 pt-4 pb-[15px]">Retries</a></li>
    </ul>
    <div class="pt-8 pl-8">
      <p>Severity: normal</p>
      <p class="mt-[30px] flex items-center gap-2">Duration: <svg class="size-6"><use href="#i-clock"/></svg>8s 178ms</p>
      <h3 class="mt-[30px] text-[32px] leading-[38px] font-bold">Execution</h3>
    </div>
    <button class="mt-[34px] flex items-center gap-2.5 pl-5 font-bold"><svg class="mb-1 h-3.5 w-5"><use href="#i-down"/></svg>Test body</button>
    <ul class="mt-3 pr-8 pl-[60px]">
      <li class="flex items-start py-3.5"><svg class="mt-1 mr-1.5 size-6 shrink-0 text-[#97cc64]"><use href="#i-right"/></svg><a href="#" class="flex-1">Before Hooks<br><span class="text-[26px] text-[#999]">1 sub-step</span></a><span class="mt-[34px] -mb-[34px] text-[26px] text-[#999]">170ms</span></li>
      <li class="flex items-start py-3.5"><svg class="mt-1 mr-1.5 size-6 shrink-0 fill-[#97cc64]"><use href="#i-check"/></svg><span class="flex-1">page.goto( https://www.redmine.org/)</span><span class="mt-[34px] -mb-[34px] text-[26px] text-[#999]">3s 929ms</span></li>
      <li class="flex items-start py-3.5"><svg class="mt-1 mr-1.5 size-6 shrink-0 fill-[#97cc64]"><use href="#i-check"/></svg><span class="flex-1">locator.click([href="/account/register"])</span><span class="mt-[34px] -mb-[34px] text-[26px] text-[#999]">1s 042ms</span></li>
      <li class="flex items-start py-3.5"><svg class="mt-1 mr-1.5 size-6 shrink-0 fill-[#97cc64]"><use href="#i-check"/></svg><span class="flex-1">locator.fill(#user_login)</span><span class="mt-[34px] -mb-[34px] text-[26px] text-[#999]">234ms</span></li>
      <li class="flex items-start py-3.5"><svg class="mt-1 mr-1.5 size-6 shrink-0 fill-[#97cc64]"><use href="#i-check"/></svg><span class="flex-1">locator.fill(#user_password)</span><span class="mt-[34px] -mb-[34px] text-[26px] text-[#999]">88ms</span></li>
      <li class="flex items-start py-3.5"><svg class="mt-1 mr-1.5 size-6 shrink-0 fill-[#97cc64]"><use href="#i-check"/></svg><span class="flex-1">locator.fill(#user_password_confirmation)</span><span class="mt-[34px] -mb-[34px] text-[26px] text-[#999]">22ms</span></li>
      <li class="flex items-start py-3.5"><svg class="mt-1 mr-1.5 size-6 shrink-0 fill-[#97cc64]"><use href="#i-check"/></svg><span class="flex-1">locator.fill(#user_firstname)</span><span class="mt-[34px] -mb-[34px] text-[26px] text-[#999]">30ms</span></li>
      <li class="flex items-start py-3.5"><svg class="mt-1 mr-1.5 size-6 shrink-0 fill-[#97cc64]"><use href="#i-check"/></svg><span class="flex-1">locator.fill(#user_lastname)</span><span class="mt-[34px] -mb-[34px] text-[26px] text-[#999]">27ms</span></li>
      <li class="flex items-start py-3.5"><svg class="mt-1 mr-1.5 size-6 shrink-0 fill-[#97cc64]"><use href="#i-check"/></svg><span class="flex-1">locator.click([type="submit"])</span><span class="mt-[34px] -mb-[34px] text-[26px] text-[#999]">2s 322ms</span></li>
      <li class="flex items-start py-3.5"><svg class="mt-1 mr-1.5 size-6 shrink-0 fill-[#97cc64]"><use href="#i-check"/></svg><span class="flex-1">expect.toContainText</span><span class="mt-[34px] -mb-[34px] text-[26px] text-[#999]">187ms</span></li>
      <li class="flex items-start py-3.5"><svg class="mt-1 mr-1.5 size-6 shrink-0 text-[#97cc64]"><use href="#i-right"/></svg><a href="#" class="flex-1">After Hooks<br><span class="text-[26px] text-[#999]">1 sub-step</span></a><span class="mt-[34px] -mb-[34px] text-[26px] text-[#999]">115ms</span></li>
    </ul>
    <div class="mt-2 flex items-center pr-8 pl-[61px] text-2xl leading-7">
      <button class="flex items-center"><svg class="mr-3 mb-1.5 h-3.5 w-[18px]"><use href="#i-down"/></svg><svg class="mr-2 h-6 w-[21px]"><use href="#i-image"/></svg>screenshot</button>
      <a href="#" class="ml-auto flex items-center gap-1.5"><svg class="size-5"><use href="#i-save"/></svg>38.1 KB</a>
      <button class="ml-8" aria-label="Full screen"><svg class="size-5"><use href="#i-expand"/></svg></button>
    </div>

    <!-- Attachment preview -->
    <div class="mt-3.5 ml-10 bg-[#f8f8f8] p-2.5 font-['DejaVu_Sans',sans-serif] text-[11px] leading-4 text-[#444]">
      <div class="bg-[#f0eadb] px-[9px]">
        <div class="bg-white shadow-md">
          <div class="flex h-[18px] items-center justify-between border-b border-[#567da8] bg-[#3e5b76] px-1.5 text-[9px] font-bold text-white">
            <div class="flex gap-2"><a href="#">Home</a><a href="#">Projects</a><a href="#">Help</a></div>
            <div class="flex gap-2 pr-1"><a href="#">Sign in</a><a href="#">Register</a></div>
          </div>
          <div class="flex h-[73px] items-start justify-between border-b-2 border-[#9dbfe0] bg-[#507aa8] pt-3 pr-[9px] pl-1.5">
            <h4 class="font-['Open_Sans',sans-serif] text-[21px] leading-7 font-bold text-[#f8f8f8]">Redmine</h4>
            <label class="flex items-center gap-1.5 pt-0.5 text-[#f8f8f8]">Search:<input type="text" class="h-5 w-[135px] bg-white"></label>
          </div>
          <div class="flex">
            <div class="min-w-0 flex-1 border-r border-[#ddd] px-2.5 pt-2">
              <h5 class="font-['Open_Sans',sans-serif] text-base leading-6 font-semibold text-[#555]">Register</h5>
              <div class="mt-2 flex h-[47px] items-center border-2 border-[#dd0000] bg-[#ffe3e3] pl-2 text-[#880000]">
                <svg class="size-3.5" viewBox="0 0 14 14"><circle cx="7" cy="7" r="6.500" fill="#ec6a55"/><path d="M7 3v5M7 9.500v2" stroke="#fff" stroke-width="1.500"/></svg>
                <span class="ml-8">•</span><span class="ml-1">Email can't be blank</span>
              </div>
              <form class="mt-2.5 h-40 border border-[#e4e4e4] bg-[#f6f6f6] pt-2.5 pl-[11px]">
                <div class="flex items-start"><label for="login" class="mr-1.5 w-[157px] text-right font-bold whitespace-nowrap">Login <span class="text-[#bb0000]">*</span></label><input id="login" type="text" value="black-hairedhouseboat" class="h-5 w-[637px] border-2 border-[#b5b5bb] bg-white font-['Liberation_Sans',sans-serif] text-[12px] text-black"></div>
                <div class="mt-[7px] flex items-start"><label for="pass" class="mr-1.5 w-[157px] text-right font-bold whitespace-nowrap">Password <span class="text-[#bb0000]">*</span></label><input id="pass" type="password" class="h-[21px] w-[167px] rounded-xs border border-[#767676] bg-white"></div>
                <p class="ml-[163px] pt-0.5 text-[10px] text-[#999]">Must be at least 4 characters long.</p>
                <div class="mt-1.5 flex items-start"><label for="conf" class="mr-1.5 w-[157px] text-right font-bold whitespace-nowrap">Confirmation <span class="text-[#bb0000]">*</span></label><input id="conf" type="password" class="h-[21px] w-[167px] rounded-xs border border-[#767676] bg-white"></div>
              </form>
            </div>
            <div class="w-[274px]"></div>
          </div>
        </div>
      </div>
    </div>
  </section>
</div>
</body>
</html>
